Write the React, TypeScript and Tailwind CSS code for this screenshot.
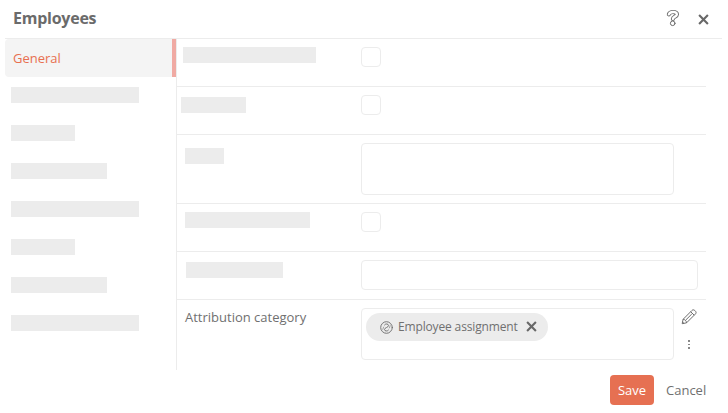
import React from 'react';

function Bar({ className }: { className: string }) {
  return <div className={`h-4 shrink-0 bg-[#ececec] ${className}`} />;
}

function Checkbox() {
  return <div role="checkbox" aria-checked="false" className="h-5 w-5 rounded-[4px] border border-[#ececec]" />;
}

function Row({ label, children, className }: { label: React.ReactNode; children: React.ReactNode; className: string }) {
  return (
    <div className={`flex w-[529px] shrink-0 pt-2 ${className}`}>
      <div className="w-[184px] shrink-0">{label}</div>
      {children}
    </div>
  );
}

function HelpIcon() {
  return (
    <svg width="14" height="18" viewBox="0 0 14 18" fill="none" strokeLinejoin="round" strokeLinecap="round">
      <path d="M2.9 5.3C3.5 3.7 5.2 3 7 3c2.3 0 3.9 1 3.9 2.5C10.9 7.8 6.9 7.5 6.9 10" stroke="#6c6c6c" strokeWidth="4.2" />
      <path d="M2.9 5.3C3.5 3.7 5.2 3 7 3c2.3 0 3.9 1 3.9 2.5C10.9 7.8 6.9 7.5 6.9 10" stroke="#fff" strokeWidth="2.3" />
      <circle cx="6.7" cy="14.3" r="2.3" fill="#fff" stroke="#6c6c6c" />
    </svg>
  );
}

function CloseIcon({ size }: { size: number }) {
  return (
    <svg width={size} height={size} viewBox="0 0 12 12" fill="none" stroke="#686868" strokeWidth="2.3">
      <path d="M1.2 1.2l9.6 9.6M10.8 1.2l-9.6 9.6" />
    </svg>
  );
}

function CategoryIcon() {
  return (
    <svg width="13" height="13" viewBox="0 0 13 13" fill="none" stroke="#707070" strokeWidth=".95" strokeLinecap="round" strokeLinejoin="round">
      <circle cx="6.5" cy="6.5" r="5.8" />
      <path d="M4.5 3.9C5.3 2.5 8.5 2.5 8.5 4.6c0 1.9-4 1.9-4 3.9 0 1.9 3.1 2 4 .6" />
      <path d="M3.6 6.1L2.8 8.4M9.4 6.9l.8-2.3" strokeWidth=".6" />
    </svg>
  );
}

function PencilIcon() {
  return (
    <svg width="16" height="16" viewBox="0 0 16 16" fill="none" stroke="#666" strokeWidth=".95" strokeLinejoin="round">
      <path d="M1.2 14.7l.9-4.4 8.8-8.8c1-1 2-.8 2.9 0l.6.6c.8.9 1 1.9 0 2.9l-8.8 8.8zM9.7 2.7l3.5 3.5M2.1 10.3c1.8.1 3.3 1.6 3.5 3.5M4.6 11.2l6.2-6.2M1.5 13l1.5 1.4" />
    </svg>
  );
}

const navWidths = ['w-32', 'w-16', 'w-24', 'w-32', 'w-16', 'w-24', 'w-32'];

export default function App() {
  return (
    <div className="h-[413px] w-[728px] overflow-hidden bg-white pl-[5px] font-['Open_Sans',sans-serif] text-[13px] leading-[18px] text-[#707070]">
      <header className="flex h-[39px] w-[717px] items-center border-b border-[#ececec] pr-[13.5px] pl-2">
        <h1 className="-mt-[2px] flex-1 text-base leading-[22px] font-bold tracking-[-0.25px] text-[#6b6b6b]">Employees</h1>
        <button aria-label="Help" className="-mt-[2px] mr-[17.5px]"><HelpIcon /></button>
        <button aria-label="Close"><CloseIcon size={11} /></button>
      </header>
      <main className="flex h-[331px]">
        <nav className="w-[172px] border-r border-[#ececec]">
          <div className="flex h-[38px] items-center rounded-l-[4px] border-r-4 border-[#f0aaa3] bg-[#f4f4f4] pl-2 text-[#e86f50]">General</div>
          <div className="flex flex-col gap-[22px] pt-[10px] pl-[6px]">
            {navWidths.map((width, i) => <Bar key={i} className={width} />)}
          </div>
        </nav>
        <section className="flex flex-col">
          <Row className="h-12 border-b border-[#ececec]" label={<Bar className="ml-[6px] w-[133px]" />}><Checkbox /></Row>
          <Row className="h-12 border-b border-[#ececec]" label={<Bar className="mt-[2px] ml-1 w-[65px]" />}><Checkbox /></Row>
          <Row className="h-[69px] border-b border-[#ececec]" label={<Bar className="mt-[5px] ml-2 w-[39px]" />}>
            <div className="h-[52px] w-[313px] rounded-[4px] border border-[#ececec]" />
          </Row>
          <Row className="h-12 border-b border-[#ececec]" label={<Bar className="ml-2 w-[125px]" />}><Checkbox /></Row>
          <Row className="h-12 border-b border-[#ececec]" label={<Bar className="mt-[2px] ml-[9px] w-[97px]" />}>
            <div className="h-[30px] w-[337px] rounded-[4px] border border-[#ececec]" />
          </Row>
          <Row className="h-[70px]" label={<div className="pl-2">Attribution category</div>}>
            <div className="h-[52px] w-[313px] rounded-[4px] border border-[#ececec] p-1">
              <div className="flex h-7 w-[182px] items-center rounded-full bg-[#ececec] pl-[14px] text-xs">
                <CategoryIcon />
                <span className="ml-[5px] w-[120px] tracking-[-0.15px] whitespace-nowrap">Employee assignment</span>
                <button aria-label="Remove" className="ml-[7.5px] -mt-[2px]"><CloseIcon size={11} /></button>
              </div>
            </div>
            <div className="ml-[7px] flex w-4 flex-col items-center pt-px">
              <button aria-label="Edit"><PencilIcon /></button>
              <div className="mt-[15px] flex flex-col gap-[2px]">
                <i className="size-[1.5px] bg-[#888]" /><i className="size-[1.5px] bg-[#888]" /><i className="size-[1.5px] bg-[#888]" />
              </div>
            </div>
          </Row>
        </section>
      </main>
      <footer className="flex w-[701px] items-center justify-end gap-3 pt-[5px]">
        <button className="h-[30px] w-11 rounded-[4px] bg-[#e67052] text-white">Save</button>
        <button className="w-10 whitespace-nowrap">Cancel</button>
      </footer>
    </div>
  );
}
